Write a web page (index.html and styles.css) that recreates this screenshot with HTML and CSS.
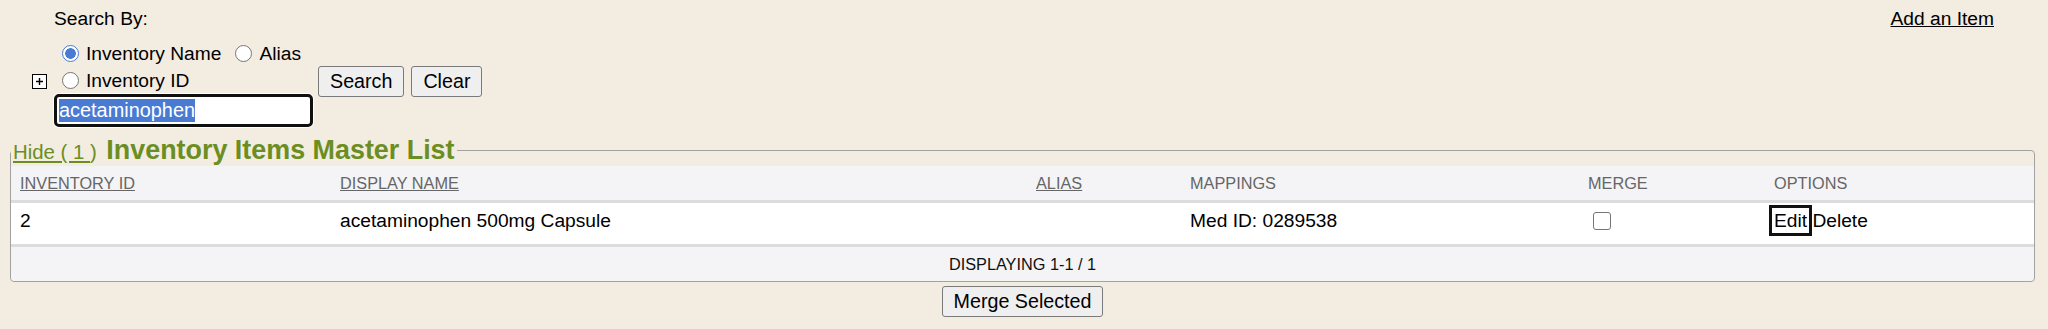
FILE: index.html
```html
<!DOCTYPE html>
<html lang="en">
<head>
  <meta charset="UTF-8">
  <title>Inventory Items Master List</title>
  <link rel="stylesheet" href="styles.css">
</head>
<body>
  <div class="top">
    <form class="search" onsubmit="return false">
      <div class="search-label">Search By:</div>
      <div class="search-row">
        <span class="expand">
          <svg width="15" height="15" viewBox="0 0 15 15">
            <rect x="0.5" y="0.5" width="14" height="14" fill="#fff" stroke="#000"/>
            <path d="M4 7.5h7M7.5 4v7" stroke="#000" stroke-width="1.4"/>
          </svg>
        </span>
        <div class="fields">
          <label class="opt-line">
            <input type="radio" name="by" class="radio" checked>Inventory Name
            <input type="radio" name="by" class="radio spaced">Alias
          </label>
          <label class="opt-line">
            <input type="radio" name="by" class="radio">Inventory ID
          </label>
          <div class="query"><span class="sel">acetaminophen</span></div>
        </div>
        <div class="actions">
          <button class="btn">Search</button>
          <button class="btn">Clear</button>
        </div>
      </div>
    </form>
    <a class="add-link" href="#">Add an Item</a>
  </div>

  <fieldset class="master">
    <legend><span class="toggle"><a href="#">Hide ( 1 </a>)</span> <span class="title">Inventory Items Master List</span></legend>
    <table class="items">
      <colgroup>
        <col style="width:320px">
        <col style="width:696px">
        <col style="width:154px">
        <col style="width:398px">
        <col style="width:186px">
        <col>
      </colgroup>
      <thead>
        <tr>
          <th><a href="#">INVENTORY ID</a></th>
          <th><a href="#">DISPLAY NAME</a></th>
          <th><a href="#">ALIAS</a></th>
          <th>MAPPINGS</th>
          <th>MERGE</th>
          <th>OPTIONS</th>
        </tr>
      </thead>
      <tbody>
        <tr>
          <td>2</td>
          <td>acetaminophen 500mg Capsule</td>
          <td></td>
          <td>Med ID: 0289538</td>
          <td><input type="checkbox" class="check"></td>
          <td><span class="edit">Edit</span> Delete</td>
        </tr>
      </tbody>
      <tfoot>
        <tr>
          <td colspan="6">DISPLAYING 1-1 / 1</td>
        </tr>
      </tfoot>
    </table>
  </fieldset>

  <div class="merge-bar">
    <button class="btn">Merge Selected</button>
  </div>
</body>
</html>
```

FILE: styles.css
```css
body {
  margin: 8px;
  background-color: #f3ece0;
  font-family: "Liberation Sans", Arial, sans-serif;
  font-size: 19.2px;
  color: #000;
}

.top {
  display: flex;
  justify-content: space-between;
  align-items: flex-start;
}

.search-label {
  margin-left: 46px;
  line-height: 22px;
  margin-bottom: 10px;
}

.search-row {
  display: flex;
  align-items: flex-start;
}

.expand {
  display: block;
  margin: 34px 7px 0 24px;
  height: 15px;
}

.expand svg {
  display: block;
}

.fields {
  display: flex;
  flex-direction: column;
}

.opt-line {
  display: flex;
  align-items: center;
  height: 27px;
}

.radio {
  appearance: none;
  -webkit-appearance: none;
  width: 17px;
  height: 17px;
  margin: 0 7px 0 8px;
  border: 1px solid #767676;
  border-radius: 50%;
  background: #fff;
  box-sizing: border-box;
}

.radio:checked {
  border: 1.5px solid #4a7bd3;
  background: radial-gradient(circle, #4a7bd3 0 5px, #fff 5.6px);
}

.radio.spaced {
  margin-left: 14px;
}

.query {
  width: 259px;
  height: 33px;
  box-sizing: border-box;
  border: 3px solid #101010;
  border-radius: 5px;
  background: #fff;
  box-shadow: 0 0 0 1px #fff;
  padding: 2px 0 0 2px;
  font-size: 19.9px;
  line-height: 23px;
}

.sel {
  display: inline-block;
  background: #4a7bd3;
  color: #fff;
  height: 23px;
}

.actions {
  display: flex;
  gap: 7px;
  margin: 26px 0 0 5px;
}

.btn {
  font-family: "Liberation Sans", Arial, sans-serif;
  font-size: 19.7px;
  height: 31px;
  padding: 0 11px;
  background: #efefef;
  border: 1px solid #7a7a7a;
  border-radius: 3px;
  color: #000;
}

.add-link {
  color: #000;
  line-height: 22px;
  margin-right: 46px;
}

.master {
  margin: 8px 5px 0 2px;
  padding: 0;
  border: 1px solid #a2a2a2;
  border-radius: 4px;
  min-width: 0;
}

.master legend {
  padding: 0 2px;
  font-size: 26.9px;
  line-height: 30px;
  height: 31px;
  color: #6b8e23;
}

.toggle {
  font-size: 20.4px;
  line-height: 1;
}

.toggle a {
  color: #6b8e23;
}

.title {
  font-weight: bold;
  margin-left: 2px;
}

.items {
  width: 100%;
  table-layout: fixed;
  border-collapse: separate;
  border-spacing: 0;
}

.items th {
  text-align: left;
  font-weight: normal;
  font-size: 16.3px;
  color: #666;
  background: #f4f4f6;
  padding: 6px 9px;
  line-height: 22px;
  border-bottom: 3px solid #dcdcdc;
}

.items th a {
  color: #666;
}

.items tbody td {
  background: #fff;
  padding: 7px 9px 12px;
  line-height: 22px;
  border-bottom: 3px solid #dcdcdc;
  white-space: nowrap;
}

.items tfoot td {
  background: #f4f4f6;
  text-align: center;
  font-size: 16.3px;
  color: #111;
  padding: 6px 9px;
  line-height: 22px;
  border-radius: 0 0 4px 4px;
}

.check {
  appearance: none;
  -webkit-appearance: none;
  width: 18px;
  height: 18px;
  margin: 0 0 0 5px;
  border: 1px solid #767676;
  border-radius: 3px;
  background: #fff;
  vertical-align: -3px;
}

.edit {
  outline: 3px solid #111;
  outline-offset: 2px;
}

.merge-bar {
  display: flex;
  justify-content: center;
  margin-top: 4px;
  padding-right: 3px;
}
```
